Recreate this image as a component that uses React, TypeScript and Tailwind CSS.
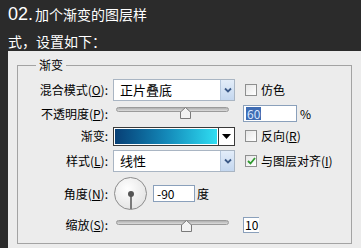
import React from "react"

const font = { fontFamily: '"Noto Sans CJK SC", "Liberation Sans", sans-serif' }

function Chevron() {
  return (
    <div className="w-[14px] h-full bg-gradient-to-b from-[#e3edf9] to-[#c4d7ef] border-l border-[#b6c8de] flex items-center justify-center">
      <svg width="8" height="6" viewBox="0 0 8 6">
        <path d="M1 1.5 L4 4.5 L7 1.5" fill="none" stroke="#3c5a88" strokeWidth="1.8" />
      </svg>
    </div>
  )
}

function Select({ value }: { value: string }) {
  return (
    <div className="w-[122px] h-[22px] bg-white border border-[#a9b5c3] flex">
      <div className="flex-1 pl-[6px] text-[13px] leading-[20px] text-black">{value}</div>
      <Chevron />
    </div>
  )
}

function Check({ checked, label }: { checked?: boolean; label: React.ReactNode }) {
  return (
    <div className="flex items-center ml-[10px]">
      <div className="w-[12px] h-[12px] border border-[#8e8f8f] bg-gradient-to-br from-[#e6e6e6] to-white flex items-center justify-center">
        {checked && (
          <svg width="9" height="8" viewBox="0 0 9 8">
            <path d="M1 4 L3.5 6.5 L8 1" fill="none" stroke="#2f9a2f" strokeWidth="1.8" />
          </svg>
        )}
      </div>
      <span className="ml-[4px] text-[12px] text-black">{label}</span>
    </div>
  )
}

function Slider({ thumb, top }: { thumb: number; top: string }) {
  return (
    <div className={`relative ml-[3px] w-[113px] h-[17px]`}>
      <div className={`absolute left-0 right-0 ${top} h-[5px] rounded-full bg-gradient-to-b from-[#b0b0b0] to-[#dcdcdc] border border-[#9a9a9a]`} />
      <svg className={`absolute ${top}`} style={{ left: thumb }} width="11" height="12" viewBox="0 0 11 12">
        <polygon points="5.5,0.5 10.5,5 10.5,11.5 0.5,11.5 0.5,5" fill="#f2f2f2" stroke="#7a7a7a" />
      </svg>
    </div>
  )
}

function Label({ children }: { children: React.ReactNode }) {
  return <div className="w-[90px] text-right text-[12px] text-black pr-[0px]">{children}</div>
}

export default function App() {
  return (
    <div className="w-[361px] h-[248px] bg-[#2b2b2b] overflow-hidden flex flex-col" style={font}>
      <div className="h-[51px] px-2 text-white">
        <div className="mt-[5px] leading-[18px] flex items-baseline">
          <span className="text-[18px]" style={{ fontFamily: '"Liberation Sans", sans-serif' }}>02.</span>
          <span className="text-[14px] ml-[2px]">加个渐变的图层样</span>
        </div>
        <div className="mt-[11px] text-[14px] leading-[14px]">式，设置如下：</div>
      </div>

      <div className="flex-1 ml-2 bg-[#ececec] pt-[14px] pl-[9px]">
        <div className="relative w-[335px] h-[179px] border border-[#a3a3a3]">
          <div className="absolute left-[18px] top-[-9px] px-[3px] bg-[#ececec] text-[12px] leading-[16px] text-black">渐变</div>

          <div className="pt-[13px] flex flex-col">
            <div className="h-[22px] flex items-center">
              <Label>混合模式(<span className="underline">O</span>):</Label>
              <div className="ml-[5px]"><Select value="正片叠底" /></div>
              <Check label="仿色" />
            </div>

            <div className="mt-[2px] h-[21px] flex items-center">
              <Label>不透明度(<span className="underline">P</span>):</Label>
              <div className="ml-[5px] w-[122px]"><Slider thumb={64} top="top-[2px]" /></div>
              <div className="ml-[8px] w-[54px] h-[17px] bg-white border border-[#8aa0bb] flex items-center pl-[2px]">
                <span className="bg-[#3f6cb3] text-[#d8e6ff] text-[12px] leading-[13px] px-[1px]">60</span>
              </div>
              <span className="ml-[3px] text-[12px] text-black">%</span>
            </div>

            <div className="mt-[2px] h-[20px] flex items-center">
              <Label>渐变:</Label>
              <div className="ml-[5px] w-[122px] h-[19px] flex border border-[#3a3a3a] bg-white">
                <div className="flex-1 m-[1px] bg-gradient-to-r from-[#083f75] via-[#1488b8] to-[#30def2]" />
                <div className="w-[16px] border-l border-[#3a3a3a] bg-white flex items-center justify-center">
                  <svg width="9" height="5" viewBox="0 0 9 5"><polygon points="0,0 9,0 4.5,5" fill="#000" /></svg>
                </div>
              </div>
              <Check label={<>反向(<span className="underline">R</span>)</>} />
            </div>

            <div className="mt-[4px] h-[22px] flex items-center">
              <Label>样式(<span className="underline">L</span>):</Label>
              <div className="ml-[5px]"><Select value="线性" /></div>
              <Check checked label={<>与图层对齐(<span className="underline">I</span>)</>} />
            </div>

            <div className="mt-[4px] h-[35px] flex items-center">
              <Label>角度(<span className="underline">N</span>):</Label>
              <div className="ml-[6px] relative w-[33px] h-[33px] rounded-full border border-[#8c8c8c] bg-[radial-gradient(circle_at_40%_35%,#ffffff,#dcdcdc)]">
                <div className="absolute left-[15px] top-[15px] w-[2px] h-[16px] bg-[#7a7a7a]" />
                <div className="absolute left-[13px] top-[13px] w-[6px] h-[6px] rounded-full bg-[#555]" />
              </div>
              <div className="ml-[6px] w-[42px] h-[17px] bg-white border border-[#8aa0bb] text-[12px] leading-[15px] pl-[3px] text-black">-90</div>
              <span className="ml-[2px] text-[12px] text-black">度</span>
            </div>

            <div className="mt-[4px] h-[19px] flex items-center">
              <Label>缩放(<span className="underline">S</span>):</Label>
              <div className="ml-[5px] w-[122px]"><Slider thumb={65} top="top-[4px]" /></div>
              <div className="ml-[8px] w-[16px] h-[16px] bg-white border-l border-t border-b border-[#8aa0bb] text-[12px] leading-[14px] pl-[1px] text-black overflow-hidden">10</div>
            </div>
          </div>
        </div>
      </div>
    </div>
  )
}
